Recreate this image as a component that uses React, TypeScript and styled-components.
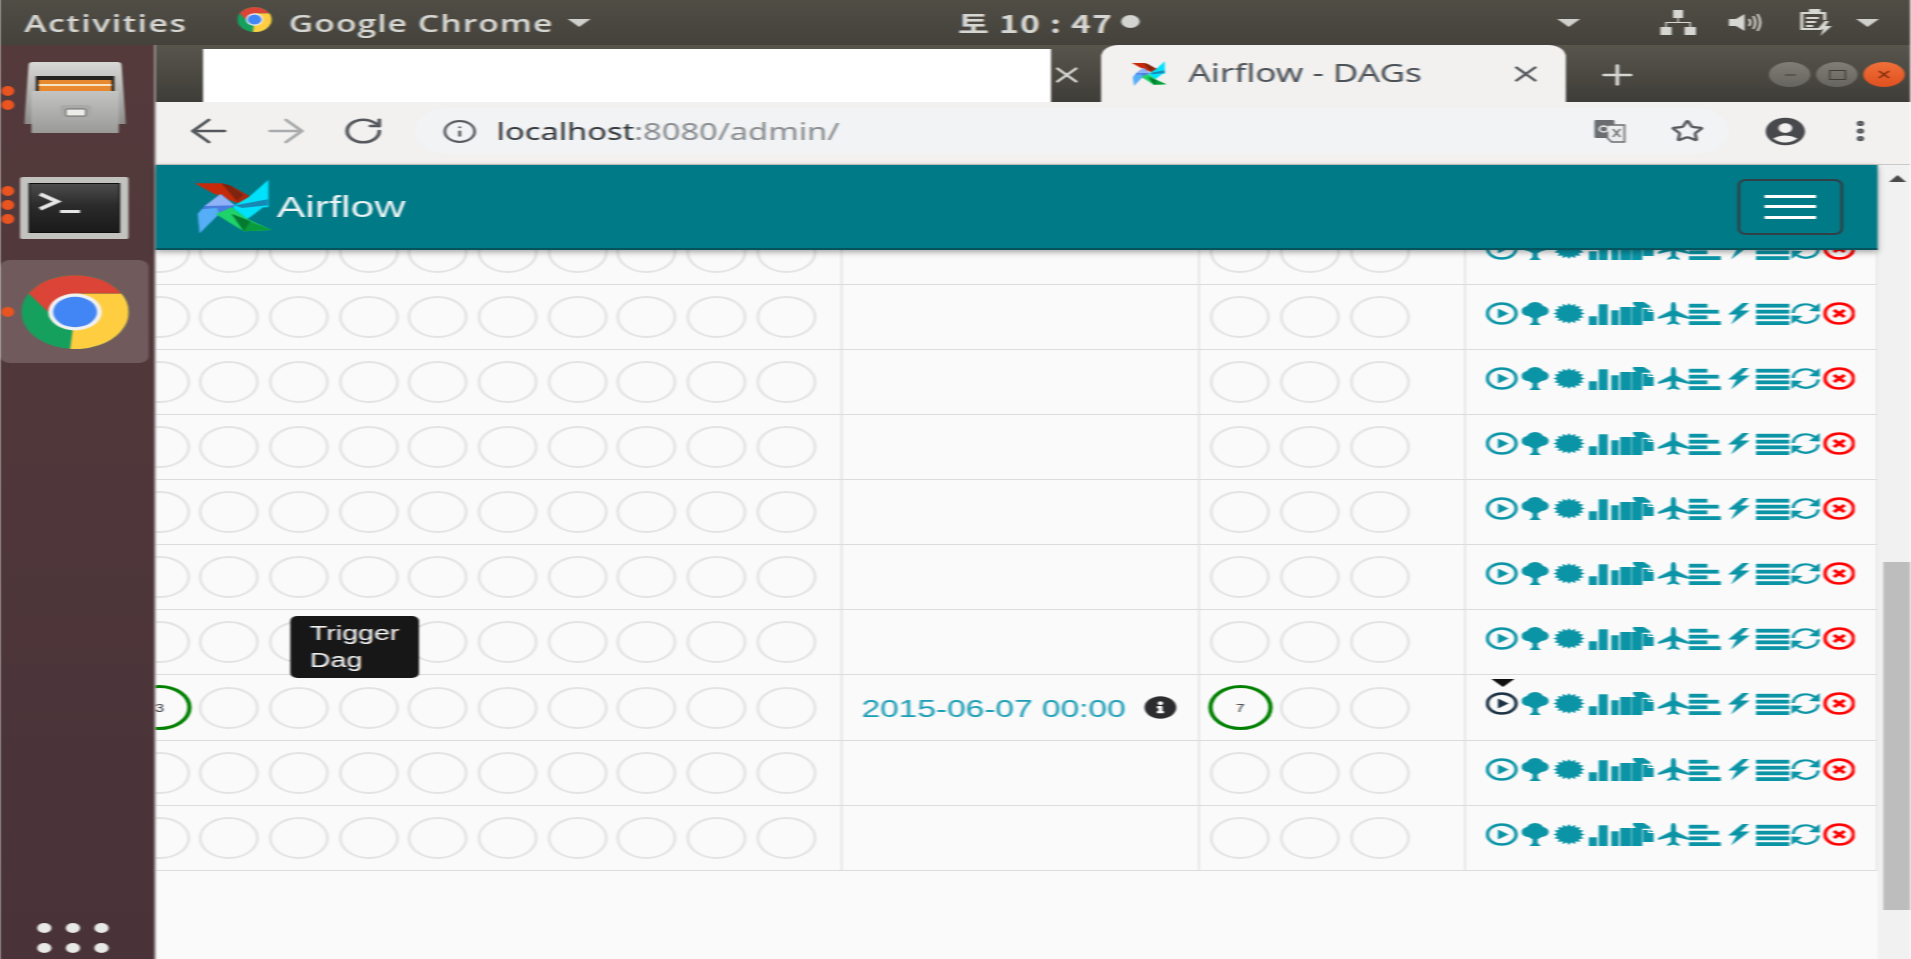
import React from "react";
import styled, { createGlobalStyle } from "styled-components";
import { ArrowLeft, ArrowRight, RotateCw, Info, Star, EllipsisVertical, X, Plus, Minus } from "lucide-react";
import { MdAccountCircle } from "react-icons/md";
import { FaInfoCircle } from "react-icons/fa";

// the reference is a screen capture stretched sideways, so the page is built
// at its natural width and widened once
const stretch = 1.43;

const teal = "#0a94a6";
const rowCount = 10;
const activeRow = 7;

const GlobalStyle = createGlobalStyle`
  html, body {
    margin: 0;
    height: 100%;
    overflow: hidden;
    background: #fafafa;
    font-family: "Liberation Sans", Arial, sans-serif;
  }
`;

const Stage = styled.div`
  display: flex;
  flex-direction: column;
  width: ${1911 / stretch}px;
  height: 959px;
  overflow: hidden;
  transform: scaleX(${stretch});
  transform-origin: 0 0;
  filter: blur(0.7px);
`;

/* ---------- gnome top bar ---------- */

const TopBar = styled.div`
  display: flex;
  align-items: center;
  flex: 0 0 45px;
  height: 45px;
  background: linear-gradient(#504d45, #44423b);
  color: #d6d6d2;
  font-family: "Open Sans", sans-serif;
  font-weight: 600;
  font-size: 23.5px;
  padding-left: 17px;
`;

const BarLabel = styled.span<{ $ml?: number; $spacing?: number }>`
  margin-left: ${(p) => p.$ml ?? 0}px;
  letter-spacing: ${(p) => p.$spacing ?? 0}px;
  white-space: nowrap;
`;

const Clock = styled(BarLabel)`
  font-family: "Noto Sans CJK KR", "Open Sans", sans-serif;
`;

const Caret = styled.i<{ $ml: number }>`
  display: block;
  margin-left: ${(p) => p.$ml}px;
  border-left: 8px solid transparent;
  border-right: 8px solid transparent;
  border-top: 8px solid #cfcfcb;
`;

const StatusDot = styled.i`
  display: block;
  width: 13px;
  height: 13px;
  margin-left: 6px;
  margin-top: -3px;
  border-radius: 50%;
  background: #d4d4d0;
`;

const BarIcon = styled.svg<{ $ml: number }>`
  display: block;
  flex: none;
  margin-left: ${(p) => p.$ml}px;
`;

/* ---------- dock ---------- */

const Body = styled.div`
  display: flex;
  flex: 1;
  min-height: 0;
`;

const Dock = styled.div`
  position: relative;
  display: flex;
  flex-direction: column;
  align-items: flex-start;
  flex: 0 0 109px;
  box-sizing: border-box;
  padding-top: 17px;
  background: linear-gradient(#543a3b, #493339);
  border-right: 1px solid #8d8284;
`;

const DockItem = styled.div<{ $mt: number; $active?: boolean }>`
  position: relative;
  display: flex;
  align-items: center;
  justify-content: center;
  width: 104px;
  height: ${(p) => (p.$active ? "103px" : "auto")};
  margin-top: ${(p) => p.$mt}px;
  border-radius: 7px;
  background: ${(p) => (p.$active ? "#705a5c" : "transparent")};
`;

const Pips = styled.div<{ $dy?: number }>`
  position: absolute;
  left: 1px;
  top: calc(50% + ${(p) => p.$dy ?? 0}px);
  transform: translateY(-50%);
  display: flex;
  flex-direction: column;
  gap: 4px;
`;

const Pip = styled.i`
  display: block;
  width: 9px;
  height: 10px;
  border-radius: 50%;
  background: #e95420;
`;

const AppGrid = styled.div`
  position: absolute;
  left: 26px;
  top: 878px;
  display: grid;
  grid-template-columns: repeat(3, 10px);
  gap: 10px 10px;
`;

const AppDot = styled.i`
  display: block;
  width: 10px;
  height: 10px;
  border-radius: 50%;
  background: #e9e9e7;
`;

/* ---------- browser chrome ---------- */

const Browser = styled.div`
  display: flex;
  flex-direction: column;
  flex: 1;
  min-width: 0;
`;

const TabStrip = styled.div`
  display: flex;
  flex: 0 0 57px;
  background: linear-gradient(#57554c, #3f3d38);
`;

const BlankTab = styled.div`
  width: 593px;
  margin: 4px 0 0 33px;
  background: #fff;
`;

const StripButton = styled.span<{ $ml: number }>`
  display: flex;
  align-items: center;
  margin-left: ${(p) => p.$ml}px;
  margin-top: 2px;
  color: #d5d5d2;
`;

const ActiveTab = styled.div`
  position: relative;
  display: flex;
  align-items: center;
  width: 325px;
  box-sizing: border-box;
  margin-left: 11.5px;
  padding-left: 21px;
  border-radius: 12px 12px 0 0;
  background: #f2f1f0;
  color: #4d5257;
  font-family: "Noto Sans", sans-serif;
  font-size: 24.5px;
`;

const TabTitle = styled.span`
  margin-left: 15px;
  margin-top: -2px;
  white-space: nowrap;
`;

const TabClose = styled.span`
  display: flex;
  margin-left: auto;
  margin-right: 15px;
  color: #55585c;
`;

const WindowButtons = styled.div`
  display: flex;
  align-items: center;
  gap: 4px;
  margin-left: auto;
  margin-right: 4px;
  margin-top: 2px;
`;

const WindowButton = styled.span<{ $close?: boolean }>`
  display: flex;
  align-items: center;
  justify-content: center;
  width: 29px;
  height: 25px;
  border-radius: 50%;
  background: ${(p) => (p.$close ? "linear-gradient(#f0703a, #e0501f)" : "linear-gradient(#807e76, #67655f)")};
  color: ${(p) => (p.$close ? "#7a2a0c" : "#3e3d39")};
`;

const WindowSquare = styled.i`
  display: block;
  width: 10px;
  height: 8px;
  border: 1.5px solid #3e3d39;
`;

const Toolbar = styled.div`
  display: flex;
  align-items: center;
  flex: 0 0 63px;
  box-sizing: border-box;
  padding-bottom: 4px;
  background: #f2f1f0;
  border-bottom: 1px solid #c9c9c7;
  color: #55585c;
`;

const ToolButton = styled.span<{ $ml: number; $color?: string }>`
  display: flex;
  flex: none;
  margin-left: ${(p) => p.$ml}px;
  color: ${(p) => p.$color ?? "#55585c"};
`;

const Omnibox = styled.div`
  display: flex;
  align-items: center;
  width: 919px;
  height: 46px;
  margin-left: 21px;
  padding-left: 19px;
  box-sizing: border-box;
  border-radius: 23px;
  background: #f1f3f4;
`;

const Url = styled.span`
  margin-left: 13.5px;
  font-family: "Noto Sans", sans-serif;
  font-size: 22.8px;
  color: #8a8d91;
  white-space: nowrap;
`;

const UrlHost = styled.span`
  color: #33363a;
`;

/* ---------- page ---------- */

const PageRow = styled.div`
  display: flex;
  flex: 1;
  min-height: 0;
`;

const Page = styled.div`
  display: flex;
  flex-direction: column;
  flex: 1;
  min-width: 0;
`;

const Navbar = styled.div`
  position: relative;
  z-index: 2;
  display: flex;
  align-items: center;
  flex: 0 0 85px;
  box-sizing: border-box;
  padding: 0 24px 0 26px;
  background: #007a87;
  border-bottom: 2px solid #05535d;
  box-shadow: 0 2px 5px rgba(0, 0, 0, 0.35);
`;

const Brand = styled.span`
  margin-left: 2.5px;
  font-size: 30px;
  color: #eef4f5;
`;

const NavToggle = styled.div`
  display: flex;
  flex-direction: column;
  justify-content: center;
  align-items: center;
  gap: 7.5px;
  width: 74px;
  height: 56px;
  margin-left: auto;
  box-sizing: border-box;
  border: 2px solid #2f4146;
  border-radius: 6px;
`;

const ToggleBar = styled.i`
  display: block;
  width: 36px;
  height: 3px;
  background: #fff;
`;

const Content = styled.div`
  position: relative;
  flex: 1;
  min-height: 0;
  overflow: hidden;
  background: #fafafa;
`;

const Table = styled.div`
  margin-top: -30.5px;
`;

const Row = styled.div`
  display: grid;
  grid-template-columns: 480.4px 249.4px 186.6px 287.6px;
  height: 65.15px;
  box-sizing: border-box;
  border-bottom: 1.8px solid #dcdcdc;
`;

const Cell = styled.div`
  display: flex;
  align-items: center;
  min-width: 0;
  overflow: hidden;
  box-sizing: border-box;
  border-right: 1.5px solid #dcdcdc;
`;

const RecentCell = styled(Cell)`
  justify-content: flex-end;
  gap: 6.7px;
  padding-right: 17.6px;
`;

const RunCell = styled(Cell)`
  padding: 4px 0 0 13px;
  color: #1b9fb6;
  font-size: 23.4px;
`;

const RunInfo = styled.span`
  display: flex;
  margin-left: 13px;
  margin-top: -5px;
  color: #2c2c2e;
`;

const DagRunCell = styled(Cell)`
  gap: 6.9px;
  padding-left: 7.4px;
`;

const LinkCell = styled(Cell)`
  align-items: flex-start;
  padding: 17px 0 0 13.6px;
`;

const Circle = styled.span<{ $done?: boolean }>`
  display: flex;
  align-items: center;
  justify-content: center;
  flex: none;
  box-sizing: border-box;
  width: ${(p) => (p.$done ? 45 : 42)}px;
  height: ${(p) => (p.$done ? 45 : 42)}px;
  margin: ${(p) => (p.$done ? "0 -1.5px" : "0")};
  border-radius: 50%;
  border: ${(p) => (p.$done ? "3px solid #008000" : "2px solid #e3e3e3")};
  font-size: 11px;
  color: #333;
`;

const LinkIcon = styled.svg<{ $color: string }>`
  display: block;
  flex: none;
  height: 23px;
  fill: ${(p) => p.$color};
  stroke: ${(p) => p.$color};
  stroke-width: 0;
`;

const Tooltip = styled.div`
  position: absolute;
  left: 93.7px;
  top: 366px;
  width: 90px;
  height: 62px;
  box-sizing: border-box;
  padding: 4px 8px 0 14px;
  border-radius: 5px;
  background: #171717;
  color: #f2f2f2;
  font-size: 20px;
  line-height: 27px;
`;

const TooltipArrow = styled.i`
  position: absolute;
  left: 933.6px;
  top: 429px;
  border-left: 8px solid transparent;
  border-right: 8px solid transparent;
  border-top: 8px solid #111;
`;

const Scrollbar = styled.div`
  display: flex;
  flex-direction: column;
  flex: 0 0 23.4px;
  background: #f1f1f1;
`;

const ScrollArrow = styled.i`
  display: block;
  align-self: center;
  margin-top: 10px;
  margin-left: 4px;
  border-left: 6px solid transparent;
  border-right: 6px solid transparent;
  border-bottom: 7px solid #4a4a4a;
`;

const ScrollThumb = styled.div`
  width: 19.2px;
  height: 348px;
  margin: 380px 0 0 4.2px;
  background: #bdbdbd;
`;

/* ---------- drawings ---------- */

function ChromeLogo({ width, height }: { width: number; height: number }) {
  return (
    <svg width={width} height={height} viewBox="2 2 44 44" preserveAspectRatio="none">
      <circle cx="24" cy="24" r="22" fill="#16a05d" />
      <path d="M24 13H43A22 22 0 0 1 22 46L24 24Z" fill="#ffcd40" />
      <path d="M5 13A22 22 0 0 1 43 13H24L24 24L13 24Z" fill="#db4437" />
      <circle cx="24" cy="24" r="11" fill="#f1f1f1" />
      <circle cx="24" cy="24" r="9" fill="#4285f4" />
    </svg>
  );
}

function Pinwheel({ width, height }: { width: number; height: number }) {
  return (
    <svg width={width} height={height} viewBox="40 45 240 165" preserveAspectRatio="none">
      <polygon points="45,58 125,58 216,100 190,122 165,114 100,88" fill="#c72a0a" />
      <polygon points="125,58 155,66 216,100 190,122 170,112" fill="#a8280c" />
      <polygon points="125,58 150,64 190,92 172,110" fill="#7e2410" />
      <polygon points="60,208 54,150 75,125 125,90 165,125 155,132 110,150" fill="#4a7de0" />
      <polygon points="75,126 122,90 165,124" fill="#8fb2f6" />
      <polygon points="60,208 54,150 66,136 112,132 118,150" fill="#55aef6" />
      <polygon points="266,47 266,130 250,130 202,166 160,132 165,124 206,100" fill="#00e2fb" />
      <polygon points="166,124 264,106 264,124 186,132" fill="#1788b4" />
      <polygon points="108,150 156,130 205,166 276,198 192,202 150,176" fill="#1fd269" />
      <polygon points="156,150 276,198 192,202" fill="#0a9c3c" />
      <polygon points="156,150 212,172 192,202" fill="#067a30" />
    </svg>
  );
}

function FileCabinet() {
  return (
    <svg width="71" height="71" viewBox="0 0 71 71">
      <defs>
        <linearGradient id="cabBody" x1="0" y1="0" x2="0" y2="1">
          <stop offset="0" stopColor="#d8d8d6" />
          <stop offset="1" stopColor="#8d8d8b" />
        </linearGradient>
        <linearGradient id="cabFront" x1="0" y1="0" x2="0" y2="1">
          <stop offset="0" stopColor="#c4c4c2" />
          <stop offset="1" stopColor="#9a9a98" />
        </linearGradient>
      </defs>
      <path d="M3 3Q3 0 6 0H65Q68 0 68 3L71 62H0Z" fill="url(#cabBody)" />
      <rect x="8" y="14" width="55" height="17" fill="#262320" />
      <rect x="10" y="18" width="51" height="12" fill="#e8892f" />
      <rect x="10" y="22" width="51" height="2" fill="#f7e3c2" />
      <rect x="5" y="29" width="61" height="42" fill="url(#cabFront)" />
      <rect x="25" y="43" width="22" height="15" rx="3" fill="#a9a9a7" />
      <rect x="29" y="47" width="14" height="7" rx="1" fill="#ecece9" stroke="#6c6c6a" strokeWidth="1" />
    </svg>
  );
}

function TerminalIcon() {
  return (
    <svg width="76" height="62" viewBox="0 0 76 62">
      <defs>
        <linearGradient id="termBack" x1="0" y1="0" x2="0" y2="1">
          <stop offset="0" stopColor="#4c4c4c" />
          <stop offset="0.45" stopColor="#2b2b2b" />
          <stop offset="1" stopColor="#1a1a1a" />
        </linearGradient>
      </defs>
      <rect x="0" y="0" width="76" height="62" rx="2" fill="#c2c2bf" />
      <rect x="6" y="6" width="64" height="50" fill="#0f0f0f" />
      <rect x="7" y="7" width="62" height="48" fill="url(#termBack)" />
      <path d="M14 17L26 24.5L14 32" fill="none" stroke="#e6e6e6" strokeWidth="3.5" />
      <rect x="28" y="33" width="14" height="3" fill="#e6e6e6" />
    </svg>
  );
}

const burst = (() => {
  const pts: string[] = [];
  for (let i = 0; i < 32; i++) {
    const r = i % 2 === 0 ? 1 : 0.76;
    const a = (i / 32) * Math.PI * 2;
    pts.push(`${(11.2 + Math.cos(a) * 11 * r).toFixed(2)},${(11.5 + Math.sin(a) * 10.5 * r).toFixed(2)}`);
  }
  return pts.join(" ");
})();

function LinkIcons({ active }: { active: boolean }) {
  return (
    <>
      <LinkIcon $color={active ? "#1b3144" : teal} width="25.2" viewBox="0 0 25.2 23">
        <circle cx="11.2" cy="11.5" r="10" fill="none" strokeWidth="2.4" />
        <polygon points="8.5,6.5 16,11.5 8.5,16.5" />
      </LinkIcon>
      <LinkIcon $color={teal} width="22.3" viewBox="0 0 22.3 23">
        <circle cx="5" cy="9" r="5" />
        <circle cx="14" cy="9" r="5" />
        <circle cx="9.5" cy="6" r="6" />
        <circle cx="9.5" cy="11" r="5.4" />
        <path d="M7.7 14H11.3V20L13.5 23H5.5L7.7 20Z" />
      </LinkIcon>
      <LinkIcon $color={teal} width="24.5" viewBox="0 0 24.5 23">
        <polygon points={burst} />
      </LinkIcon>
      <LinkIcon $color={teal} width="30" viewBox="0 0 30 23">
        <rect x="0" y="14.3" width="5.8" height="8.7" />
        <rect x="7" y="2.3" width="6.3" height="20.7" />
        <rect x="15.8" y="8.3" width="5.2" height="14.7" />
        <rect x="22" y="5" width="8" height="18" />
      </LinkIcon>
      <LinkIcon $color={teal} width="17.6" viewBox="0 0 17.6 23">
        <path d="M1 0H8.5L13 4V5.8H7.5V23H0V5H3L1 2Z" />
        <path d="M8 7H11.5V10H15.4V19H8Z" />
        <path d="M12.5 6.5L15.4 9H12.5Z" />
      </LinkIcon>
      <LinkIcon $color={teal} width="22.4" viewBox="0 0 22.4 23">
        <path d="M11.2 0C12.5 0 13 2 13 4V8.5L22 15V17L13 14V19L15.5 21.5V23L11.2 21.5L7 23V21.5L9.5 19V14L0.5 17V15L9.5 8.5V4C9.5 2 10 0 11.2 0Z" />
      </LinkIcon>
      <LinkIcon $color={teal} width="26.7" viewBox="0 0 26.7 23">
        <rect x="0" y="1.8" width="13" height="3.8" />
        <rect x="0" y="7.8" width="21" height="3.8" />
        <rect x="0" y="13.4" width="13" height="3.8" />
        <rect x="0" y="19.2" width="22.4" height="3.8" />
      </LinkIcon>
      <LinkIcon $color={teal} width="20.3" viewBox="0 0 20.3 23">
        <polygon points="10.5,1 0.5,12.5 6.5,12.5 2.5,22.5 15.5,8.5 9,8.5 15,1" />
      </LinkIcon>
      <LinkIcon $color={teal} width="24.3" viewBox="0 0 24.3 23">
        <rect x="0" y="1.8" width="23.3" height="3.8" />
        <rect x="0" y="7.8" width="23.3" height="3.8" />
        <rect x="0" y="13.4" width="23.3" height="3.8" />
        <rect x="0" y="19.2" width="23.3" height="3.8" />
      </LinkIcon>
      <LinkIcon $color={teal} width="22.4" viewBox="0 0 22.4 23">
        <path d="M2 11A8.7 8.7 0 0 1 17 5" fill="none" strokeWidth="2.3" />
        <polygon points="20.5,1 20.5,9.5 13,9" />
        <path d="M19.5 12.5A8.7 8.7 0 0 1 4.5 18" fill="none" strokeWidth="2.3" />
        <polygon points="0.8,22 0.8,13.5 8.5,14" />
      </LinkIcon>
      <LinkIcon $color="#f00" width="22.4" viewBox="0 0 22.4 23">
        <circle cx="11.2" cy="11.5" r="10" fill="none" strokeWidth="2.6" />
        <path d="M7.5 8L14.9 15M14.9 8L7.5 15" fill="none" strokeWidth="2.8" />
      </LinkIcon>
    </>
  );
}

function App() {
  const rows = Array.from({ length: rowCount }, (_, i) => i);
  const recent = Array.from({ length: 10 }, (_, i) => i);

  return (
    <>
      <GlobalStyle />
      <Stage>
        <TopBar>
          <BarLabel $spacing={1.1}>Activities</BarLabel>
          <BarIcon as="span" $ml={35}>
            <ChromeLogo width={24} height={25} />
          </BarIcon>
          <BarLabel $ml={12} $spacing={0.75}>Google Chrome</BarLabel>
          <Caret $ml={10} />
          <Clock $ml={257} $spacing={0.85}>토 10 : 47</Clock>
          <StatusDot />
          <Caret $ml={292} />
          <BarIcon $ml={56} width="25" height="25" viewBox="0 0 25 25" fill="#d6d6d2">
            <rect x="9" y="0" width="7" height="8" />
            <rect x="0" y="17" width="8" height="8" />
            <rect x="17" y="17" width="8" height="8" />
            <path d="M12 8H13V12H21.5V17H20.5V13H4.5V17H3.5V12H12Z" />
          </BarIcon>
          <BarIcon $ml={22} width="25" height="25" viewBox="0 0 25 25" fill="none" stroke="#d6d6d2">
            <path d="M1 9H6L12 4V21L6 16H1Z" fill="#d6d6d2" stroke="none" />
            <path d="M15 9Q17 12.5 15 16M18 6Q21 12.5 18 19M21 4Q25 12.5 21 21" strokeWidth="1.6" />
          </BarIcon>
          <BarIcon $ml={25} width="24" height="27" viewBox="0 0 24 27" fill="none" stroke="#d6d6d2" strokeWidth="2.2">
            <rect x="7" y="0" width="8" height="3" fill="#d6d6d2" stroke="none" />
            <path d="M16 20H2V4H18V11" />
            <path d="M5 9H14M5 13H12M5 17H10" strokeWidth="1.8" />
            <polygon points="18,12 13,20 17,20 15,27 23,17 18.5,17 21,12" fill="#d6d6d2" stroke="none" />
          </BarIcon>
          <Caret $ml={16} />
        </TopBar>
        <Body>
          <Dock>
            <DockItem $mt={0}>
              <Pips>
                <Pip />
                <Pip />
              </Pips>
              <FileCabinet />
            </DockItem>
            <DockItem $mt={44}>
              <Pips $dy={-3}>
                <Pip />
                <Pip />
                <Pip />
              </Pips>
              <TerminalIcon />
            </DockItem>
            <DockItem $mt={21} $active>
              <Pips>
                <Pip />
              </Pips>
              <ChromeLogo width={75} height={74} />
            </DockItem>
            <AppGrid>
              {[0, 1, 2, 3, 4, 5].map((d) => (
                <AppDot key={d} />
              ))}
            </AppGrid>
          </Dock>
          <Browser>
            <TabStrip>
              <BlankTab />
              <StripButton $ml={-2.5}>
                <X size={26} strokeWidth={2} />
              </StripButton>
              <ActiveTab>
                <Pinwheel width={25} height={25} />
                <TabTitle>Airflow - DAGs</TabTitle>
                <TabClose>
                  <X size={26} strokeWidth={2} />
                </TabClose>
              </ActiveTab>
              <StripButton $ml={20}>
                <Plus size={32} strokeWidth={2} />
              </StripButton>
              <WindowButtons>
                <WindowButton>
                  <Minus size={12} />
                </WindowButton>
                <WindowButton>
                  <WindowSquare />
                </WindowButton>
                <WindowButton $close>
                  <X size={13} />
                </WindowButton>
              </WindowButtons>
            </TabStrip>
            <Toolbar>
              <ToolButton $ml={17.8}>
                <ArrowLeft size={38} strokeWidth={1.6} />
              </ToolButton>
              <ToolButton $ml={15.8} $color="#a9abad">
                <ArrowRight size={38} strokeWidth={1.6} />
              </ToolButton>
              <ToolButton $ml={20.2}>
                <RotateCw size={30} strokeWidth={2.1} />
              </ToolButton>
              <Omnibox>
                <Info size={25} strokeWidth={1.9} color="#55585c" />
                <Url>
                  <UrlHost>localhost</UrlHost>:8080/admin/
                </Url>
                <ToolButton $ml={527.5} $color="#6a6d70">
                  <svg width="24" height="24" viewBox="0 0 24 24">
                    <rect x="1" y="1" width="14" height="18" rx="1" fill="#6a6d70" />
                    <path d="M10 6H22V23H13L10 19Z" fill="#eceded" stroke="#6a6d70" strokeWidth="1.3" />
                    <circle cx="7.5" cy="10" r="3" fill="none" stroke="#eceded" strokeWidth="1.4" />
                    <path d="M14 10L19 18M19 10L14 18" stroke="#6a6d70" strokeWidth="1.4" />
                  </svg>
                </ToolButton>
                <ToolButton $ml={30}>
                  <Star size={24} strokeWidth={2.2} />
                </ToolButton>
              </Omnibox>
              <ToolButton $ml={23} $color="#47494c">
                <MdAccountCircle size={33} />
              </ToolButton>
              <ToolButton $ml={23} $color="#55585c">
                <EllipsisVertical size={26} strokeWidth={2.8} />
              </ToolButton>
            </Toolbar>
            <PageRow>
              <Page>
                <Navbar>
                  <Pinwheel width={56} height={55} />
                  <Brand>Airflow</Brand>
                  <NavToggle>
                    <ToggleBar />
                    <ToggleBar />
                    <ToggleBar />
                  </NavToggle>
                </Navbar>
                <Content>
                  <Table>
                    {rows.map((r) => {
                      const active = r === activeRow;
                      return (
                        <Row key={r}>
                          <RecentCell>
                            {recent.map((c) => (
                              <Circle key={c} $done={active && c === 0}>
                                {active && c === 0 ? "3" : ""}
                              </Circle>
                            ))}
                          </RecentCell>
                          <RunCell>
                            {active && (
                              <>
                                2015-06-07 00:00
                                <RunInfo>
                                  <FaInfoCircle size={23} />
                                </RunInfo>
                              </>
                            )}
                          </RunCell>
                          <DagRunCell>
                            <Circle $done={active}>{active ? "7" : ""}</Circle>
                            <Circle />
                            <Circle />
                          </DagRunCell>
                          <LinkCell>
                            <LinkIcons active={active} />
                          </LinkCell>
                        </Row>
                      );
                    })}
                  </Table>
                  <Tooltip>Trigger Dag</Tooltip>
                  <TooltipArrow />
                </Content>
              </Page>
              <Scrollbar>
                <ScrollArrow />
                <ScrollThumb />
              </Scrollbar>
            </PageRow>
          </Browser>
        </Body>
      </Stage>
    </>
  );
}

export default App;
